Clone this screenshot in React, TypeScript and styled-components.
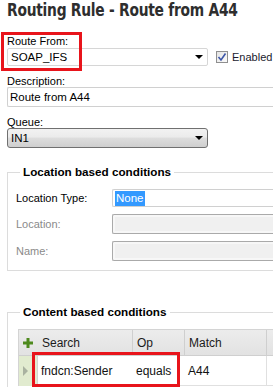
import React from "react";
import styled, { createGlobalStyle } from "styled-components";

const GlobalStyle = createGlobalStyle`
  html, body {
    margin: 0;
    padding: 0;
    background: #ffffff;
    overflow: hidden;
  }
  body {
    font-family: "Liberation Sans", Arial, sans-serif;
    font-size: 12px;
    color: #000;
  }
`;

const Page = styled.div`
  width: 273px;
  height: 387px;
  overflow: hidden;
  display: flex;
  flex-direction: column;
  padding-left: 7px;
  box-sizing: border-box;
`;

const Title = styled.h1`
  margin: 0;
  padding-top: 0;
  height: 34px;
  flex-shrink: 0;
  font-family: "DejaVu Sans Condensed", "DejaVu Sans", sans-serif;
  font-weight: bold;
  font-size: 18.5px;
  line-height: 20px;
  color: #2e2e2e;
  letter-spacing: -0.3px;
  white-space: nowrap;
  transform: scaleX(0.83);
  transform-origin: left top;
`;

const Field = styled.div<{ $top?: number }>`
  position: relative;
  display: flex;
  flex-direction: column;
  flex-shrink: 0;
  margin-top: ${(p) => p.$top ?? 0}px;
`;

const Label = styled.label`
  display: block;
  height: 12px;
  line-height: 12px;
  font-size: 11px;
  color: #000;
  white-space: nowrap;
`;

const Row = styled.div<{ $top?: number }>`
  display: flex;
  align-items: center;
  margin-top: ${(p) => p.$top ?? 0}px;
`;

const Select = styled.div<{ $gradient?: boolean; $width: number; $height: number }>`
  box-sizing: border-box;
  width: ${(p) => p.$width}px;
  height: ${(p) => p.$height}px;
  border: 1px solid ${(p) => (p.$gradient ? "#707070" : "#d6d6d6")};
  border-radius: ${(p) => (p.$gradient ? "3px" : "2px")};
  background: ${(p) =>
    p.$gradient ? "linear-gradient(#f2f2f2 0%, #ebebeb 45%, #dddddd 50%, #cfcfcf 100%)" : "#fff"};
  display: flex;
  align-items: center;
  justify-content: space-between;
  padding: 0 4px 0 3px;
  font-size: 11.5px;
`;

const Arrow = styled.span`
  width: 0;
  height: 0;
  border-left: 4px solid transparent;
  border-right: 4px solid transparent;
  border-top: 4px solid #000;
`;

const Check = styled.span`
  box-sizing: border-box;
  width: 12px;
  height: 12px;
  margin-left: 8px;
  border: 1px solid #8f8f8f;
  background: linear-gradient(135deg, #e4e4e4, #fafafa);
  display: flex;
  align-items: center;
  justify-content: center;
`;

const CheckLabel = styled.span`
  margin-left: 4px;
  font-size: 11px;
  color: #1a1a2e;
`;

const TextInput = styled.div<{ $disabled?: boolean; $height: number }>`
  box-sizing: border-box;
  height: ${(p) => p.$height}px;
  flex: 1;
  min-width: 0;
  border: 1px solid ${(p) => (p.$disabled ? "#aaaaaa" : "#d0d0d0")};
  border-right: none;
  border-radius: 2px 0 0 2px;
  background: ${(p) => (p.$disabled ? "#f0f0f0" : "#fff")};
  box-shadow: ${(p) => (p.$disabled ? "inset 0 0 0 2px #f7f7f7" : "none")};
  padding: 0 2px;
  display: flex;
  align-items: center;
  font-size: 11.5px;
  white-space: nowrap;
  margin-right: -2px;
`;

const Selected = styled.span`
  background: #3399ff;
  color: #fff;
  padding: 0 1px;
  line-height: 15px;
`;

const Highlight = styled.div<{ $left: number; $top: number; $width: number; $height: number }>`
  position: absolute;
  left: ${(p) => p.$left}px;
  top: ${(p) => p.$top}px;
  width: ${(p) => p.$width}px;
  height: ${(p) => p.$height}px;
  border: 3px solid #e8141b;
  box-sizing: border-box;
  pointer-events: none;
`;

const Fieldset = styled.fieldset<{ $top: number; $height: number }>`
  margin: ${(p) => p.$top}px -4px 0 0;
  padding: 0;
  flex-shrink: 0;
  height: ${(p) => p.$height}px;
  box-sizing: border-box;
  border: 1px solid #dcdcdc;
  border-right: none;
  border-radius: 0;
  position: relative;
`;

const Legend = styled.legend`
  margin-left: 12px;
  padding: 0 3px;
  font-weight: bold;
  font-size: 11.7px;
  line-height: 14px;
  color: #000;
`;

const FormRow = styled.div<{ $top: number }>`
  display: flex;
  align-items: center;
  margin-top: ${(p) => p.$top}px;
`;

const RowLabel = styled.span<{ $muted?: boolean }>`
  width: 96px;
  padding-left: 8px;
  flex-shrink: 0;
  font-size: 11px;
  color: ${(p) => (p.$muted ? "#8a8a8a" : "#000")};
  white-space: nowrap;
`;

const Grid = styled.div`
  margin: 10px 0 0 10px;
  border-left: 1px solid #d4d4d4;
  border-top: 1px solid #d4d4d4;
  display: grid;
  grid-template-columns: 19px 95px 52px 82px 20px;
  position: relative;
`;

const HeadCell = styled.div<{ $sep?: boolean }>`
  height: 26px;
  box-sizing: border-box;
  background: linear-gradient(#ececec, #e2e2e2);
  border-right: ${(p) => (p.$sep ? "1px solid #cfcfcf" : "none")};
  border-bottom: 1px solid #cfcfcf;
  display: flex;
  align-items: center;
  padding-left: 4px;
  font-size: 12px;
  color: #1b1b1b;
  white-space: nowrap;
`;

const PlusCell = styled(HeadCell)`
  padding-left: 4px;
`;

const RowHead = styled.div`
  height: 30px;
  background: #e1ebcf;
  border-right: 1px solid #d4d4d4;
  display: flex;
  align-items: center;
  padding-left: 4px;
  box-sizing: border-box;
`;

const Tri = styled.span`
  width: 0;
  height: 0;
  border-top: 5px solid transparent;
  border-bottom: 5px solid transparent;
  border-left: 5px solid #a9b2a0;
`;

const Cell = styled.div<{ $sep?: boolean }>`
  height: 30px;
  box-sizing: border-box;
  background: #fff;
  border-bottom: 1px solid #e0e0e0;
  border-right: ${(p) => (p.$sep ? "1px solid #e0e0e0" : "none")};
  display: flex;
  align-items: center;
  padding-left: 3px;
  font-size: 12px;
  color: #111;
  white-space: nowrap;
`;

function Plus() {
  return (
    <svg width="10" height="10" viewBox="0 0 10 10">
      <rect x="3.5" y="0" width="3" height="10" fill="#4e8a1e" />
      <rect x="0" y="3.5" width="10" height="3" fill="#4e8a1e" />
    </svg>
  );
}

function Tick() {
  return (
    <svg width="10" height="10" viewBox="0 0 10 10">
      <path d="M1.5 5 L4 8 L8.5 1.5" fill="none" stroke="#3d56a8" strokeWidth="1.6" />
    </svg>
  );
}

export default function App() {
  return (
    <>
      <GlobalStyle />
      <Page>
        <Title>Routing Rule - Route from A44</Title>

        <Field $top={1}>
          <Label>Route From:</Label>
          <Row $top={1}>
            <Select $width={201} $height={18}>
              <span>SOAP_IFS</span>
              <Arrow />
            </Select>
            <Check>
              <Tick />
            </Check>
            <CheckLabel>Enabled</CheckLabel>
          </Row>
          <Highlight $left={-6} $top={-3} $width={81} $height={39} />
        </Field>

        <Field $top={9}>
          <Label>Description:</Label>
          <Row>
            <TextInput $height={20}>Route from A44</TextInput>
          </Row>
        </Field>

        <Field $top={9}>
          <Label>Queue:</Label>
          <Row>
            <Select $gradient $width={201} $height={20}>
              <span>IN1</span>
              <Arrow />
            </Select>
          </Row>
        </Field>

        <Fieldset $top={17} $height={106}>
          <Legend>Location based conditions</Legend>
          <FormRow $top={10}>
            <RowLabel>Location Type:</RowLabel>
            <TextInput $height={18}>
              <Selected>None</Selected>
            </TextInput>
          </FormRow>
          <FormRow $top={7}>
            <RowLabel $muted>Location:</RowLabel>
            <TextInput $disabled $height={20} />
          </FormRow>
          <FormRow $top={7}>
            <RowLabel $muted>Name:</RowLabel>
            <TextInput $disabled $height={20} />
          </FormRow>
        </Fieldset>

        <Fieldset $top={34} $height={90}>
          <Legend>Content based conditions</Legend>
          <Grid>
            <PlusCell>
              <Plus />
            </PlusCell>
            <HeadCell $sep>Search</HeadCell>
            <HeadCell $sep>Op</HeadCell>
            <HeadCell $sep>Match</HeadCell>
            <HeadCell />
            <RowHead>
              <Tri />
            </RowHead>
            <Cell>fndcn:Sender</Cell>
            <Cell>equals</Cell>
            <Cell $sep>A44</Cell>
            <Cell />
            <Highlight $left={13} $top={22} $width={148} $height={35} />
          </Grid>
        </Fieldset>
      </Page>
    </>
  );
}
